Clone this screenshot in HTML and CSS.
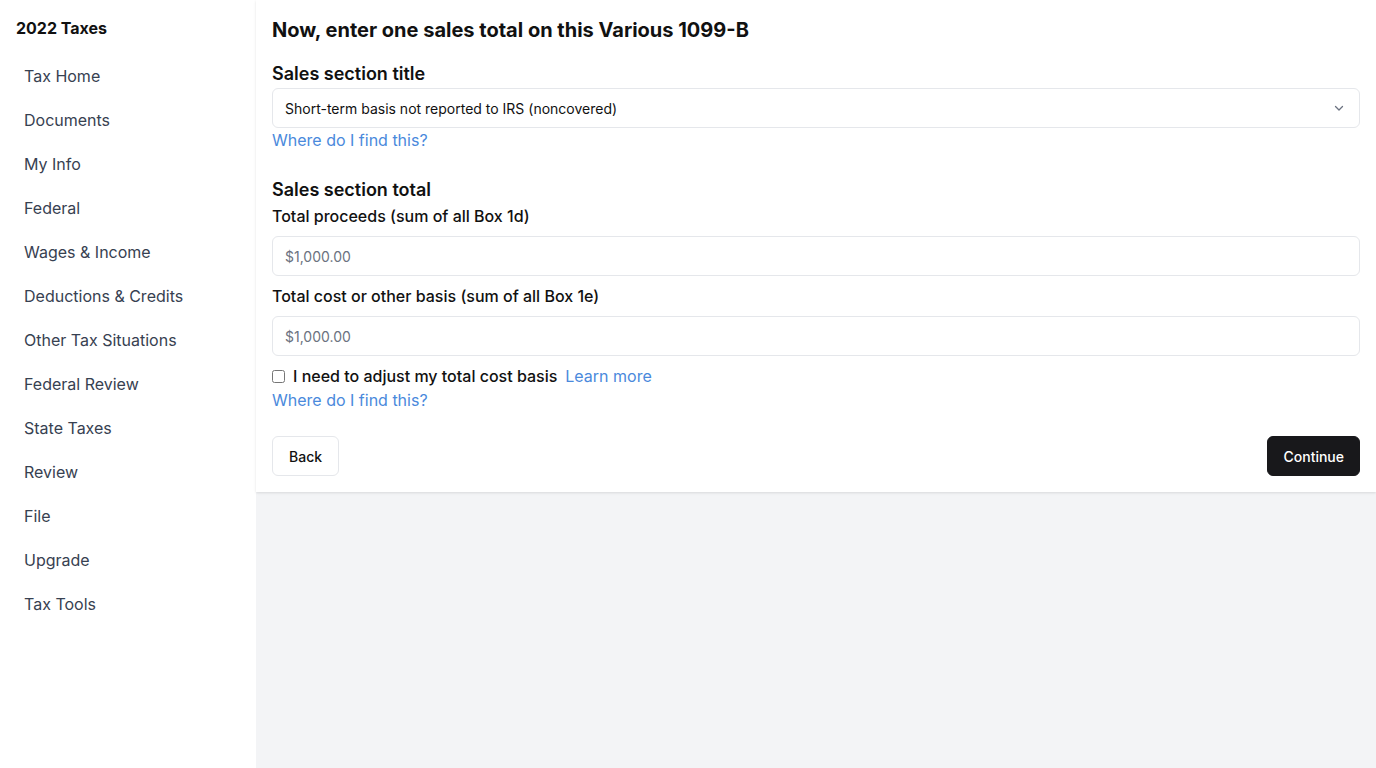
FILE: index.html
```html
<!DOCTYPE html>
<html>
<head>
<meta charset="utf-8">
<link rel="stylesheet" href="styles.css">
</head>
<body>
<div class="app">
  <aside class="sidebar">
    <div class="brand">2022 Taxes</div>
    <nav class="nav">
      <a>Tax Home</a>
      <a>Documents</a>
      <a>My Info</a>
      <a>Federal</a>
      <a>Wages &amp; Income</a>
      <a>Deductions &amp; Credits</a>
      <a>Other Tax Situations</a>
      <a>Federal Review</a>
      <a>State Taxes</a>
      <a>Review</a>
      <a>File</a>
      <a>Upgrade</a>
      <a>Tax Tools</a>
    </nav>
  </aside>
  <main class="main">
    <section class="panel">
      <h1 class="title">Now, enter one sales total on this Various 1099-B</h1>
      <h2 class="section">Sales section title</h2>
      <div class="select">
        <span>Short-term basis not reported to IRS (noncovered)</span>
        <svg width="16" height="16" viewBox="0 0 16 16"><path d="M4.5 6.5 8 10l3.5-3.5" fill="none" stroke="#6b7280" stroke-width="1.3" stroke-linecap="round" stroke-linejoin="round"/></svg>
      </div>
      <a class="link">Where do I find this?</a>
      <h2 class="section second">Sales section total</h2>
      <label class="label">Total proceeds (sum of all Box 1d)</label>
      <div class="input">$1,000.00</div>
      <label class="label">Total cost or other basis (sum of all Box 1e)</label>
      <div class="input">$1,000.00</div>
      <div class="check-row">
        <input type="checkbox" class="check">
        <span class="check-label">I need to adjust my total cost basis</span>
        <a class="link">Learn more</a>
      </div>
      <a class="link">Where do I find this?</a>
      <div class="actions">
        <button class="btn back">Back</button>
        <button class="btn continue">Continue</button>
      </div>
    </section>
  </main>
</div>
</body>
</html>
```

FILE: styles.css
```css
* { box-sizing: border-box; }
html, body { margin: 0; padding: 0; }
body {
  font-family: Inter, "Noto Sans", sans-serif;
  color: #111111;
  background: #f3f4f6;
}
.app {
  display: flex;
  min-height: 768px;
}
.sidebar {
  width: 256px;
  flex-shrink: 0;
  background: #ffffff;
  padding: 16px;
}
.brand {
  font-size: 16px;
  font-weight: 700;
  line-height: 24px;
  color: #111111;
}
.nav {
  display: flex;
  flex-direction: column;
  margin-top: 14px;
}
.nav a {
  display: block;
  padding: 10px 8px;
  font-size: 16px;
  line-height: 24px;
  color: #374151;
}
.main {
  flex: 1;
  background: #f3f4f6;
}
.panel {
  background: #ffffff;
  padding: 16px;
  display: flex;
  flex-direction: column;
  align-items: flex-start;
  box-shadow: 0 1px 3px rgba(0,0,0,0.08), 0 1px 2px rgba(0,0,0,0.04);
}
.title {
  margin: 0;
  font-size: 20px;
  line-height: 28px;
  font-weight: 700;
}
.section {
  margin: 16px 0 0;
  font-size: 18px;
  line-height: 28px;
  font-weight: 600;
}
.section.second { margin-top: 24px; margin-bottom: 0; }
.select {
  width: 100%;
  height: 40px;
  border: 1px solid #e5e7eb;
  border-radius: 6px;
  display: flex;
  align-items: center;
  justify-content: space-between;
  padding: 0 12px;
  font-size: 14px;
  color: #111111;
}
.link {
  font-size: 16px;
  line-height: 24px;
  color: #4a89dc;
}
.label {
  font-size: 16px;
  line-height: 24px;
  font-weight: 500;
}
.input {
  width: 100%;
  height: 40px;
  border: 1px solid #e5e7eb;
  border-radius: 6px;
  display: flex;
  align-items: center;
  padding: 0 12px;
  font-size: 14px;
  color: #6b7280;
  margin: 8px 0;
}
.check-row {
  display: flex;
  align-items: center;
  height: 24px;
}
.check {
  margin: 0 8px 0 0;
  width: 13px;
  height: 13px;
}
.check-label {
  font-size: 16px;
  font-weight: 500;
  line-height: 24px;
  margin-right: 8px;
}
.actions {
  width: 100%;
  display: flex;
  justify-content: space-between;
  margin-top: 24px;
}
.btn {
  height: 40px;
  border-radius: 6px;
  font-family: Inter, "Noto Sans", sans-serif;
  font-size: 14px;
  font-weight: 500;
  padding: 0 16px;
  cursor: pointer;
}
.back {
  background: #ffffff;
  border: 1px solid #e5e7eb;
  color: #111111;
}
.continue {
  background: #18181b;
  border: 1px solid #18181b;
  color: #ffffff;
  padding: 0 15px;
}
```
